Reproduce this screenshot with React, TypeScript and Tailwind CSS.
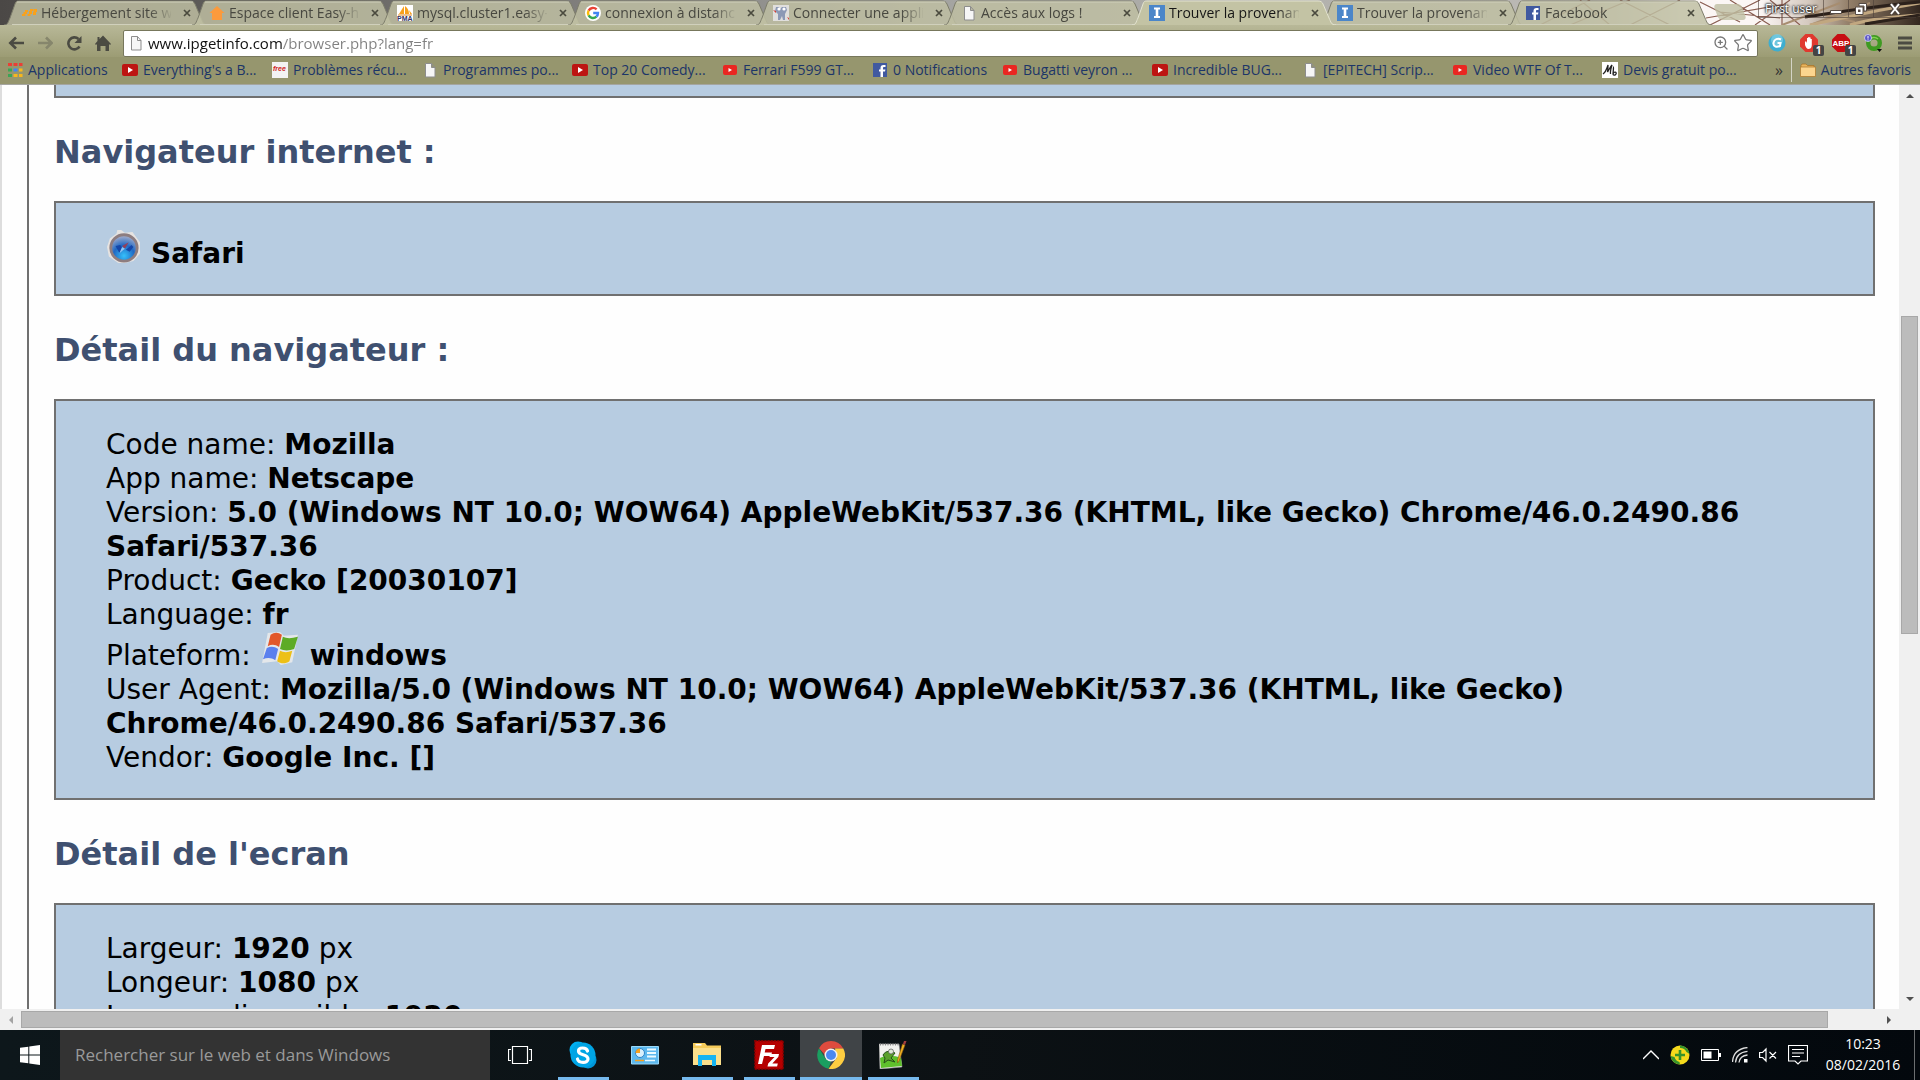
import type { ReactNode } from 'react'
import { Star, ZoomIn } from 'lucide-react'

type IconName = 'moto' | 'house' | 'pma' | 'google' | 'elephant' | 'page' | 'info' | 'facebook' | 'youtubeDark' | 'youtube' | 'free' | 'mb' | 'apps' | 'folder'

const TABS: { icon: IconName; label: string; active?: boolean }[] = [
  { icon: 'moto', label: 'Hébergement site web' },
  { icon: 'house', label: 'Espace client Easy-hosting' },
  { icon: 'pma', label: 'mysql.cluster1.easy-hosting' },
  { icon: 'google', label: 'connexion à distance' },
  { icon: 'elephant', label: 'Connecter une application' },
  { icon: 'page', label: 'Accès aux logs !' },
  { icon: 'info', label: 'Trouver la provenance', active: true },
  { icon: 'info', label: 'Trouver la provenance' },
  { icon: 'facebook', label: 'Facebook' },
]

const BOOKMARKS: { icon: IconName; label: string; width: string }[] = [
  { icon: 'apps', label: 'Applications', width: 'w-[115px]' },
  { icon: 'youtubeDark', label: "Everything's a B...", width: 'w-[150px]' },
  { icon: 'free', label: 'Problèmes récu...', width: 'w-[150px]' },
  { icon: 'page', label: 'Programmes po...', width: 'w-[150px]' },
  { icon: 'youtubeDark', label: 'Top 20 Comedy...', width: 'w-[150px]' },
  { icon: 'youtube', label: 'Ferrari F599 GT...', width: 'w-[150px]' },
  { icon: 'facebook', label: '0 Notifications', width: 'w-[130px]' },
  { icon: 'youtube', label: 'Bugatti veyron ...', width: 'w-[150px]' },
  { icon: 'youtubeDark', label: 'Incredible BUG...', width: 'w-[150px]' },
  { icon: 'page', label: '[EPITECH] Scrip...', width: 'w-[150px]' },
  { icon: 'youtube', label: 'Video WTF Of T...', width: 'w-[150px]' },
  { icon: 'mb', label: 'Devis gratuit po...', width: 'w-[150px]' },
]

function SmallIcon({ name }: { name: IconName }) {
  const shapes: Record<IconName, ReactNode> = {
    moto: (
      <path
        d="M4 5h3v2H6v2H4.500v2H1V9h1.500V7H4zM9 4h3v2h-1v3H9.500v2H6.500V9H8V6h1zM12.500 4H16v3h-1v3h-3V7h.500z"
        fill="#f9a11b"
      />
    ),
    house: <path d="M8 1L15.500 8H13v7H3V8H.5z" fill="#fb9a3c" />,
    pma: (
      <>
        <path d="M0 0h16v16H0z" fill="#fff" />
        <path d="M7 1v8H2zM8 1c3 2 4 5 4 8H8zM12 5l3 4h-2z" fill="#f7a01c" />
        <path d="M1 10h14" stroke="#e0851a" />
        <text x="0" y="16" fontSize="7" fontWeight="700" fontFamily="Liberation Sans, sans-serif" fill="#336">PMA</text>
      </>
    ),
    google: (
      <>
        <circle cx="8" cy="8" r="8" fill="#fff" />
        <g fill="none" strokeWidth="2.400">
          <path d="M11.600 4.400A5 5 0 0 0 3.600 5.600" stroke="#ea4335" />
          <path d="M3.600 5.600A5 5 0 0 0 3.600 10.400" stroke="#fbbc05" />
          <path d="M3.600 10.400A5 5 0 0 0 11.400 11.700" stroke="#34a853" />
          <path d="M11.400 11.700A5 5 0 0 0 13 8H8.200" stroke="#4285f4" />
        </g>
      </>
    ),
    elephant: (
      <>
        <path d="M0 0h16v16H0z" fill="#e0dfdd" />
        <path d="M3 2h3l1 2 2-2h4l1 3-2 4v6h-2l-1-4-2 4H5V9L2 6z" fill="#8c99b5" />
        <circle cx="6" cy="4" r="1.600" fill="#fff" />
        <circle cx="11" cy="4" r="1.600" fill="#fff" />
        <path d="M0 5l3 1v2zM14 12l2 1v2z" fill="#d23b30" />
      </>
    ),
    page: <path d="M3.500 1.500h6l3.500 4v9.500H3.500zM9.500 1.500v4H13" fill="#f6f6f6" stroke="#8d8d8d" />,
    info: (
      <>
        <path d="M0 0h16v16H0z" fill="#4b86c9" />
        <path d="M5 2.500h6v2H9.300v6.500H11v2H5v-2h1.700V4.500H5z" fill="#fff" />
      </>
    ),
    facebook: (
      <>
        <path d="M1 1h14v14H1z" fill="#4059a0" />
        <path d="M8.500 15V9.500H7v-2h1.500V6c0-2 1-3 3-3h2v2h-1.300c-.8 0-1.200.3-1.200 1.100v1.400h2.400l-.4 2H11V15z" fill="#fff" />
      </>
    ),
    youtubeDark: (
      <>
        <rect x="0" y="2" width="16" height="12" rx="2" fill="#bd1512" />
        <path d="M6 5l5 3-5 3z" fill="#fff" />
      </>
    ),
    youtube: (
      <>
        <rect x="1" y="3" width="14" height="10" rx="2" fill="#ea2721" />
        <path d="M6.500 6l3.500 2-3.500 2z" fill="#fff" />
      </>
    ),
    free: (
      <>
        <path d="M0 0h16v16H0z" fill="#f3f3f3" />
        <text x="1" y="9" fontSize="7" fontStyle="italic" fontWeight="700" fontFamily="Liberation Sans, sans-serif" fill="#d01c1c">free</text>
      </>
    ),
    mb: (
      <>
        <path d="M0 0h16v16H0z" fill="#fff" />
        <path d="M1 12C4 10 5 6 6 3c0 3 0 5-.500 7C7 8 8 5 10 3c-1 3-2 6-1.500 9M11 5c1 0 0 5 0 7 1-3 4-2 3 0s-3 1-3 0" fill="none" stroke="#222" strokeWidth="1.300" />
      </>
    ),
    apps: (
      <>
        <path d="M1 1h4v3H1zM6.500 1h4v3h-4zM12 1h3.500v3H12z" fill="#ea3f35" />
        <path d="M1 6.500h4v3H1zM1 12h4v3H1z" fill="#3ca455" />
        <path d="M6.500 6.500h4v3h-4z" fill="#4285f4" />
        <path d="M12 6.500h3.500v3H12zM6.500 12h4v3h-4zM12 12h3.500v3H12z" fill="#f7b71d" />
      </>
    ),
    folder: (
      <>
        <path d="M1 3.500l1-1.500h4l1.500 1.500H14V6H1z" fill="#e8b45c" stroke="#a8742a" strokeWidth="0.800" />
        <path d="M.5 5h15v9.500H.5z" fill="#fbd58e" stroke="#b07c31" strokeWidth="0.800" />
      </>
    ),
  }
  return (
    <svg viewBox="0 0 16 16" className="size-4 shrink-0" aria-hidden="true">
      {shapes[name]}
    </svg>
  )
}

function CloseGlyph() {
  return (
    <svg viewBox="0 0 8 8" className="size-2" aria-hidden="true">
      <path d="M1 1l6 6M7 1L1 7" stroke="#4a4a3e" strokeWidth="1.700" />
    </svg>
  )
}

function Tab({ icon, label, active }: { icon: IconName; label: string; active?: boolean }) {
  return (
    <div className={`relative -mr-4 h-[25px] w-[204px] shrink-0 ${active ? 'z-10' : ''}`}>
      <svg viewBox="0 0 204 25" className="absolute inset-0 h-[25px] w-[204px]" aria-hidden="true">
        <path
          d="M0 25C4 25 4 22 6 18L11 4C12 1 13 1 16 1H186C189 1 190 2 191 4L197 18C199 22 199 25 204 25Z"
          fill={active ? '#c3c3a4' : '#bfbfa2'}
          fillOpacity={active ? 1 : 0.84}
        />
        <path
          d="M0 25C4 25 4 22 6 18L11 4C12 1 13 1 16 1H186C189 1 190 2 191 4L197 18C199 22 199 25 204 25"
          fill="none"
          stroke={active ? '#e4e4d0' : '#7d7d6b'}
        />
        {!active && <path d="M13 2H189M8 24.500H197" stroke="#d0d0bc" />}
      </svg>
      <div className="relative flex h-[25px] items-center gap-1 pt-px pl-[17px]">
        <SmallIcon name={icon} />
        <button
          type="button"
          className={`w-[130px] overflow-hidden text-left text-sm leading-5 whitespace-nowrap [mask-image:linear-gradient(to_right,#000_108px,transparent_132px)] ${
            active ? 'text-[#161616]' : 'text-[#484840]'
          }`}
        >
          {label}
        </button>
        <button type="button" aria-label={`Fermer ${label}`} className="ml-1 flex size-4 items-center justify-center">
          <CloseGlyph />
        </button>
      </div>
    </div>
  )
}

// lattice of the wallpaper that shows through the window frame
function FrameArt() {
  return (
    <svg viewBox="0 0 400 25" preserveAspectRatio="xMaxYMid slice" className="absolute top-0 right-0 h-[25px] w-[400px]" aria-hidden="true">
      <defs>
        <linearGradient id="frame" x1="0" x2="1">
          <stop offset="0" stopColor="#b9b3a6" stopOpacity="0" />
          <stop offset="0.400" stopColor="#fbf6f4" />
          <stop offset="0.600" stopColor="#fbf6f4" />
          <stop offset="0.720" stopColor="#d5cac0" />
          <stop offset="0.820" stopColor="#94806a" />
          <stop offset="1" stopColor="#33271f" />
        </linearGradient>
      </defs>
      <path d="M0 0h400v25H0z" fill="url(#frame)" />
      <g fill="none">
        <path
          d="M20 25L70 0M50 25l60-25M60 0l30 25M100 0l50 25M110 25l50-25M180 2l40 20M190 25l50-25M210 0l40 25M235 25l35-25M250 0l30 25M262 25V0M200 12l60 6M186 18l80-14"
          stroke="#8a5e52"
          strokeWidth="1.200"
        />
        <path d="M262 25l58-22M275 8l60 14M290 25l60-22" strokeWidth="2" stroke="#a78d70" />
        <path d="M290 25c30-6 50-12 110-22M330 25c20-6 40-8 70-10" strokeWidth="3" stroke="#c1a780" />
        <path d="M285 17c30-4 60-10 115-15M345 24l55-9" strokeWidth="3" stroke="#2c211b" />
      </g>
    </svg>
  )
}

function TabStrip() {
  return (
    <div className="relative flex h-[25px] overflow-hidden bg-linear-to-r from-[#4b4846] via-[#a5a5a2] to-[#c9c6c0]">
      <FrameArt />
      <div className="relative flex pl-1">
        {TABS.map((tab, i) => (
          <Tab key={i} {...tab} />
        ))}
        <button type="button" aria-label="Nouvel onglet" className="mt-1 ml-5 h-4 w-7 skew-x-[20deg] rounded-sm bg-[#bfbfa2]/80" />
      </div>
      <div className="relative ml-auto flex h-[18px] pr-1">
        <button type="button" className="w-[66px] border border-t-0 border-[#4c4038]/60 text-xs leading-[17px] text-white [text-shadow:0_0_2px_#222,0_0_2px_#222,0_0_3px_#222]">
          First user
        </button>
        <button type="button" aria-label="Réduire" className="flex w-6 items-center justify-center border-b border-[#4c4038]/60">
          <svg viewBox="0 0 12 12" className="size-3">
            <path d="M.5 7.500h11v3H.5z" fill="#fff" stroke="#554a44" />
          </svg>
        </button>
        <button type="button" aria-label="Restaurer" className="flex w-[25px] items-center justify-center border-b border-l border-[#4c4038]/60">
          <svg viewBox="0 0 12 12" className="size-3">
            <path d="M4 .5h7.500V8H9V3H4zM.5 4H8v7.500H.5z" fill="#fff" stroke="#554a44" />
            <path d="M3 6.500h2.500V9H3z" fill="#554a44" />
          </svg>
        </button>
        <button type="button" aria-label="Fermer" className="flex w-[43px] items-center justify-center border-b border-l border-[#4c4038]/60">
          <svg viewBox="0 0 12 12" className="size-3">
            <path d="M2 1l8 10M10 1L2 11" stroke="#4d433d" strokeWidth="4" />
            <path d="M2 1l8 10M10 1L2 11" stroke="#fff" strokeWidth="2" />
          </svg>
        </button>
      </div>
    </div>
  )
}

function Badge() {
  return (
    <span className="absolute -right-1.5 -bottom-1 h-[11px] w-[11px] rounded-xs bg-[#444] text-center text-[10px] leading-[11px] font-bold text-white">1</span>
  )
}

function Toolbar() {
  return (
    <div className="flex h-8 items-center bg-linear-to-b from-[#b8b898] to-[#9c9c74] pt-1 pl-2">
      <div className="flex w-[115px] items-center gap-[13px]">
        <button type="button" aria-label="Précédent">
          <svg viewBox="0 0 16 16" className="size-4">
            <path d="M16 8H3M8 2.500L2.300 8 8 13.500" fill="none" stroke="#4b4b42" strokeWidth="2.600" />
          </svg>
        </button>
        <button type="button" aria-label="Suivant">
          <svg viewBox="0 0 16 16" className="size-4">
            <path d="M1 8h13M9 2.500L14.700 8 9 13.500" fill="none" stroke="#86866c" strokeWidth="2.600" />
          </svg>
        </button>
        <button type="button" aria-label="Actualiser">
          <svg viewBox="0 0 16 16" className="size-4">
            <path d="M13.500 11.500A6 6 0 1 1 12.500 4" fill="none" stroke="#4b4b42" strokeWidth="2.600" />
            <path d="M15.500 1v7H8.500z" fill="#4b4b42" />
          </svg>
        </button>
        <button type="button" aria-label="Accueil">
          <svg viewBox="0 0 16 16" className="size-4">
            <path d="M8 .5L16 9l-1 1-1-1v7h-3.500v-5h-5v5H2V9l-1 1-1-1L2.500 6V2h2v2z" fill="#4b4b42" />
          </svg>
        </button>
      </div>
      <div className="flex h-[27px] flex-1 items-center rounded-xs border border-[#77775c] bg-white px-1">
        <SmallIcon name="page" />
        <input
          type="text"
          aria-label="Adresse"
          defaultValue="www.ipgetinfo.com/browser.php?lang=fr"
          className="ml-1 min-w-0 flex-1 bg-linear-to-r from-[#111] from-[135px] to-[#808080] to-[135px] bg-clip-text text-[15px] leading-6 text-transparent outline-none"
        />
        <button type="button" aria-label="Zoom" className="mr-1">
          <ZoomIn className="size-4 text-[#777]" />
        </button>
        <button type="button" aria-label="Ajouter aux favoris">
          <Star className="size-5 text-[#777]" strokeWidth={1.500} />
        </button>
      </div>
      <div className="flex items-center gap-[14px] pr-2 pl-[10px]">
        <button type="button" aria-label="Ghostery">
          <svg viewBox="0 0 18 18" className="size-[18px]">
            <circle cx="9" cy="9" r="8.500" fill="#3eaed0" />
            <circle cx="9" cy="6" r="6" fill="#8fd6e8" fillOpacity="0.600" />
            <path d="M13 5.500C10 4 6 5 5.500 9S9 13.500 12 12l.5-3H9.500" fill="none" stroke="#fff" strokeWidth="2" />
          </svg>
        </button>
        <button type="button" aria-label="Adblock" className="relative">
          <svg viewBox="0 0 18 18" className="size-[18px]">
            <path d="M5.500 0h7L18 5.500v7L12.500 18h-7L0 12.500v-7z" fill="#e0392f" />
            <path d="M5 8l1-1 1 2V4h1.200v4V3h1.200v5V3.500h1.200V8.500V5h1.200v6c0 3-1.800 4-3.300 4S6 13.500 5 11z" fill="#fff" />
          </svg>
          <Badge />
        </button>
        <button type="button" aria-label="Adblock Plus" className="relative">
          <svg viewBox="0 0 18 18" className="size-[18px]">
            <path d="M5.500 0h7L18 5.500v7L12.500 18h-7L0 12.500v-7z" fill="#c70d12" />
            <text x="9" y="12" textAnchor="middle" fontSize="8" fontWeight="700" fontFamily="Liberation Sans, sans-serif" fill="#fff">ABP</text>
          </svg>
          <Badge />
        </button>
        <button type="button" aria-label="Extension">
          <svg viewBox="0 0 18 18" className="size-[18px]">
            <circle cx="10" cy="9" r="5.800" fill="none" stroke="#3f9a22" strokeWidth="4.400" />
            <path d="M5 7a5.500 5.500 0 0 1 9-2" fill="none" stroke="#86cf52" strokeWidth="1.500" />
            <circle cx="4" cy="4" r="3.500" fill="#5a55c8" stroke="#dddcf4" strokeWidth="0.800" />
            <path d="M4 2v2.600M4 5.400v1" stroke="#fff" />
            <path d="M13 15h5l-2.500 3z" fill="#111" />
          </svg>
        </button>
        <button type="button" aria-label="Menu" className="ml-0.5">
          <svg viewBox="0 0 14 14" className="size-[14px]">
            <path d="M0 .5h14v3H0zM0 5.500h14v3H0zM0 10.500h14v3H0z" fill="#4b4b42" />
          </svg>
        </button>
      </div>
    </div>
  )
}

function BookmarkBar() {
  return (
    <nav className="flex h-[28px] items-center border-b border-[#a5a5a0] bg-[#96966e] pb-0.5 pl-[7px] text-sm text-[#1c3568]">
      {BOOKMARKS.map((b) => (
        <a key={b.label} href="#" className={`flex shrink-0 items-center gap-[5px] whitespace-nowrap ${b.width}`}>
          <SmallIcon name={b.icon} />
          {b.label}
        </a>
      ))}
      <button type="button" className="ml-auto text-base leading-5 text-[#333]">»</button>
      <span className="mx-2 h-6 w-px bg-[#d4d4c6]" />
      <a href="#" className="flex items-center gap-[5px] pr-[9px]">
        <SmallIcon name="folder" />
        Autres favoris
      </a>
    </nav>
  )
}

function SafariIcon() {
  return (
    <svg viewBox="0 0 35 35" className="mr-[10px] inline h-[33px] w-[35px] align-baseline" aria-hidden="true">
      <defs>
        <radialGradient id="dial" cx="0.500" cy="0.800" r="0.800">
          <stop offset="0" stopColor="#35c0fb" />
          <stop offset="0.500" stopColor="#2069c4" />
          <stop offset="1" stopColor="#b3b4cc" />
        </radialGradient>
      </defs>
      <path d="M11 0h4l4 3 8-1 5 7 3 4v12l-7 8-9 2h-7L2 28 0 18l3-9 7-5z" fill="#e6e3e1" />
      <circle cx="18" cy="19" r="14" fill="url(#dial)" stroke="#8d7d80" strokeWidth="3" />
      <path d="M9 17l5-1 4 5-5 3zM20 21l6-5 2 2-4 5z" fill="#1546a8" />
      <path d="M23 13l-4 7-3-3z" fill="#93405a" />
      <path d="M16 18l3 2-6 5z" fill="#8cc7f5" />
    </svg>
  )
}

function WindowsFlag() {
  return (
    <svg viewBox="0 0 40 35" className="mr-[10px] inline h-[33px] w-10 align-baseline" aria-hidden="true">
      <path d="M7 1l13-1 4 4 15-1-6 29-12 3-4-4-16 2z" fill="#e4e7ea" />
      <path d="M10 3c4-3 8-3 12 0l-3 13c-4-3-8-3-12-1z" fill="#e2572a" />
      <path d="M23 5c4 2 9 2 16 0l-4 13c-5 2-11 2-15 0z" fill="#5dab26" />
      <path d="M6 17c4-2 8-2 12 1l-3 12c-4-3-9-3-13-1z" fill="#5b80ee" />
      <path d="M20 20c4 2 8 2 13 0l-3 11c-4 3-9 3-13 0z" fill="#edc017" />
    </svg>
  )
}

function Panel({ title, children }: { title: string; children: ReactNode }) {
  return (
    <section>
      <h2 className="pt-[34px] pb-[29px] text-[32px] leading-10 font-bold text-[#3f5070]">{title}</h2>
      <div className="border-2 border-[#707070] bg-[#b7cce1] px-[50px] pt-[27px] pb-[23px] text-[28px] leading-[34px] text-black">{children}</div>
    </section>
  )
}

function Row({ label, value, icon, unit }: { label: string; value: string; icon?: ReactNode; unit?: string }) {
  return (
    <p>
      {label}: {icon}
      <b>{value}</b>
      {unit && ` ${unit}`}
    </p>
  )
}

function PageContent() {
  return (
    <main className="min-w-0 flex-1 overflow-hidden border-l-2 border-[#dddddd] bg-[#fefefe] pl-[25px] font-['DejaVu_Sans',Verdana,sans-serif]">
      <div className="min-h-full border-l-2 border-[#707070] pr-6 pl-[25px]">
        <div className="h-[13px] border-2 border-t-0 border-[#707070] bg-[#b7cce1]" />
        <Panel title="Navigateur internet :">
          <p>
            <SafariIcon />
            <b>Safari</b>
          </p>
        </Panel>
        <Panel title="Détail du navigateur :">
          <Row label="Code name" value="Mozilla" />
          <Row label="App name" value="Netscape" />
          <Row label="Version" value="5.0 (Windows NT 10.0; WOW64) AppleWebKit/537.36 (KHTML, like Gecko) Chrome/46.0.2490.86 Safari/537.36" />
          <Row label="Product" value="Gecko [20030107]" />
          <Row label="Language" value="fr" />
          <Row label="Plateform" icon={<WindowsFlag />} value="windows" />
          <Row label="User Agent" value="Mozilla/5.0 (Windows NT 10.0; WOW64) AppleWebKit/537.36 (KHTML, like Gecko) Chrome/46.0.2490.86 Safari/537.36" />
          <Row label="Vendor" value="Google Inc. []" />
        </Panel>
        <Panel title="Détail de l'ecran">
          <Row label="Largeur" value="1920" unit="px" />
          <Row label="Longeur" value="1080" unit="px" />
          <Row label="Largeur disponible" value="1920" unit="px" />
        </Panel>
      </div>
    </main>
  )
}

function Arrow({ d, color }: { d: string; color: string }) {
  return (
    <svg viewBox="0 0 8 8" className="size-2" aria-hidden="true">
      <path d={d} fill={color} />
    </svg>
  )
}

function VerticalScrollbar() {
  return (
    <div className="flex w-[21px] shrink-0 flex-col items-center bg-[#f0f0f0]">
      <button type="button" aria-label="Haut" className="flex h-[21px] items-center">
        <Arrow d="M0 6l4-4 4 4z" color="#505050" />
      </button>
      <div className="flex w-full flex-1 flex-col items-center">
        <div className="flex-[210]" />
        <div className="w-[17px] flex-[317] border border-[#a8a8a8] bg-[#bcbcbc]" />
        <div className="flex-[355]" />
      </div>
      <button type="button" aria-label="Bas" className="flex h-[21px] items-center">
        <Arrow d="M0 2l4 4 4-4z" color="#505050" />
      </button>
    </div>
  )
}

function HorizontalScrollbar() {
  return (
    <div className="flex h-[21px] shrink-0 items-center bg-[#f0f0f0] pr-[21px]">
      <button type="button" aria-label="Gauche" className="flex w-[21px] justify-center">
        <Arrow d="M6 0L2 4l4 4z" color="#a3a3a3" />
      </button>
      <div className="flex h-[17px] flex-1">
        <div className="flex-[1807] border border-[#a8a8a8] bg-[#bcbcbc]" />
        <div className="flex-[50]" />
      </div>
      <button type="button" aria-label="Droite" className="flex w-[21px] justify-center">
        <Arrow d="M2 0l4 4-4 4z" color="#505050" />
      </button>
    </div>
  )
}

function SkypeIcon() {
  return (
    <svg viewBox="0 0 28 28" className="size-7">
      <circle cx="9" cy="9" r="8.500" fill="#00aff0" />
      <circle cx="19" cy="19" r="8.500" fill="#0096d8" />
      <circle cx="14" cy="14" r="12.500" fill="#00a5e5" />
      <path d="M18.500 10c-1-4-9-4-9 0 0 5 9.500 2.500 9.500 8 0 4.500-9.500 4.500-10.500 0" fill="none" stroke="#fff" strokeWidth="3.200" strokeLinecap="round" />
    </svg>
  )
}

function PanelIcon() {
  return (
    <svg viewBox="0 0 28 28" className="size-7">
      <path d="M.5 5.500h27v17.500H.5z" fill="#5cb8ee" stroke="#9ad9f8" />
      <circle cx="9" cy="12" r="4.500" fill="#d8f0fc" stroke="#2a83c8" />
      <path d="M9 12V7.500A4.500 4.500 0 0 0 4.500 12z" fill="#f7a01c" />
      <path d="M16 8.500h9M16 12h9M16 15.500h9" stroke="#eafaff" strokeWidth="1.800" />
      <path d="M4 19.500h9" stroke="#f7a01c" strokeWidth="1.500" />
      <path d="M14 19.500h10" stroke="#eafaff" strokeWidth="1.500" />
    </svg>
  )
}

function FolderIcon() {
  return (
    <svg viewBox="0 0 28 28" className="size-7">
      <path d="M0 2h12l2 2.500h14V24H0z" fill="#f5cb5a" />
      <path d="M2.500 3h6v1.500h-6z" fill="#fff" />
      <path d="M0 7h28v17H0z" fill="#fbdf8b" />
      <path d="M5 14h18v11h-4v-6H9v6H5z" fill="#16b4f2" />
    </svg>
  )
}

function FileZillaIcon() {
  return (
    <svg viewBox="0 0 30 30" className="size-[30px]">
      <path d="M.8.8h28.400v28.400H.8z" fill="#b50000" stroke="#7d0000" strokeWidth="1.500" strokeDasharray="2 1.200" />
      <path d="M8 5h13l-1 4h-8.500l-.8 3.500H18l-1 3.500h-7l-2 8H4zM16 14h9l-.7 3-6 6.500h5.500l-.7 3H13.500l.7-3 6.300-6.500H15.500z" fill="#fff" />
    </svg>
  )
}

function ChromeIcon() {
  return (
    <svg viewBox="0 0 28 28" className="size-7">
      <path d="M14 0a14 14 0 0 1 12.300 7.500H14L8 14 2 7.200A14 14 0 0 1 14 0z" fill="#dd4b3e" />
      <path d="M2 7.200l6.300 10.300L14 20.500l-2.500 7.300A14 14 0 0 1 2 7.200z" fill="#1a9f60" />
      <path d="M26.300 7.500A14 14 0 0 1 11.500 27.800l8-10.500L18 7.500z" fill="#fecd41" />
      <circle cx="14" cy="14" r="6.500" fill="#f1f1f1" />
      <circle cx="14" cy="14" r="5" fill="#4b88f0" />
    </svg>
  )
}

function NotepadIcon() {
  return (
    <svg viewBox="0 0 28 28" className="size-7">
      <path d="M0 3h20l3 23-22 2z" fill="#f2f2ee" stroke="#999" strokeWidth="0.600" />
      <path d="M1 17c6-3 14-3 21 0l1 8-21 2z" fill="#5fc02c" />
      <path d="M1 3.500h19" stroke="#888" strokeWidth="2" strokeDasharray="1 1.500" />
      <path d="M4 14c3-5 8-4 12-2l-4 5 4 4-7-2-4 3 1-5z" fill="#5aa02a" stroke="#27501a" />
      <circle cx="12" cy="10.500" r="2.500" fill="#dfe9d8" stroke="#555" strokeWidth="0.700" />
      <path d="M26 4l-6 16-1.500 2 0-3 5-16z" fill="#eeb021" stroke="#8a5a12" strokeWidth="0.600" />
      <path d="M27.500 0l-1.500 4-2-1 1-3z" fill="#a33e3e" />
    </svg>
  )
}

const APPS = [
  { name: 'Skype', icon: <SkypeIcon />, running: true },
  { name: 'Panneau de configuration', icon: <PanelIcon />, running: false },
  { name: 'Explorateur', icon: <FolderIcon />, running: true },
  { name: 'FileZilla', icon: <FileZillaIcon />, running: true },
  { name: 'Chrome', icon: <ChromeIcon />, running: true, active: true },
  { name: 'Notepad++', icon: <NotepadIcon />, running: true },
]

function Taskbar() {
  return (
    <footer className="flex h-[50px] shrink-0 bg-linear-to-r from-[#0d171b] via-[#0c1114] to-[#03080d]">
      <button type="button" aria-label="Démarrer" className="flex w-[60px] items-center justify-center">
        <svg viewBox="0 0 20 20" className="size-5">
          <path d="M0 2.800L8.300 1.700v7.800H0zM9.300 1.500L20 0v9.500H9.300zM0 10.500h8.300v7.800L0 17.200zM9.300 10.500H20V20L9.300 18.500z" fill="#fff" />
        </svg>
      </button>
      <input
        type="text"
        aria-label="Rechercher"
        placeholder="Rechercher sur le web et dans Windows"
        className="w-[430px] bg-[#333] px-[15px] text-[17px] text-white placeholder:text-[#9a9a9a] placeholder:opacity-100 outline-none"
      />
      <button type="button" aria-label="Vue des tâches" className="flex w-[62px] items-center justify-center pr-0.5">
        <svg viewBox="0 0 24 18" className="h-[18px] w-6">
          <path d="M4.500.5h15v17h-15zM3 3.500H.5v11H3M21 3.500h2.500v11H21" fill="none" stroke="#fff" strokeWidth="1.200" />
        </svg>
      </button>
      {APPS.map((app) => (
        <button
          key={app.name}
          type="button"
          aria-label={app.name}
          className={`flex w-[62px] flex-col items-center ${app.active ? 'bg-[#404447]' : ''}`}
        >
          <span className="flex flex-1 items-center pt-[3px]">{app.icon}</span>
          <span className={`h-[3px] ${app.active ? 'w-full' : 'w-[51px]'} ${app.running ? 'bg-[#76b9ed]' : ''}`} />
        </button>
      ))}
      <div className="ml-auto flex items-center">
        <div className="flex items-center gap-[11px]">
          <svg viewBox="0 0 16 16" className="size-4">
            <path d="M0 12l8-8 8 8" fill="none" stroke="#fff" strokeWidth="1.400" />
          </svg>
          <svg viewBox="0 0 20 20" className="size-5">
            <circle cx="10" cy="10" r="9.500" fill="#f5da1c" />
            <path d="M10 .5A9.500 9.500 0 0 1 19.500 9l-3-2A7 7 0 0 0 10 3zM10 19.500A9.500 9.500 0 0 1 .5 11l4 1a7 7 0 0 0 5 5z" fill="#37932b" />
            <path d="M10 5v10M5 10h10" stroke="#37932b" strokeWidth="2.600" />
          </svg>
          <svg viewBox="0 0 20 12" className="h-3 w-5">
            <path d="M.5.5h17v11H.5z" fill="none" stroke="#fff" />
            <path d="M2.500 2.500h8v7h-8zM18 4h2v4h-2z" fill="#fff" />
          </svg>
          <svg viewBox="0 0 16 16" className="size-4">
            <path d="M.5 15C1 7 6 1.500 15.500.5M3.500 15.500C4 9 8 5 15.500 4.300M7 15.500c.5-4 3.500-7 8.500-7.500" fill="none" stroke="#ddd" strokeWidth="1.300" />
            <path d="M12 12h3.500v3.500H12z" fill="#fff" />
          </svg>
          <svg viewBox="0 0 18 16" className="h-4 w-[18px]">
            <path d="M.6 5.500h3L7 2v12l-3.400-3.500h-3zM10.500 5l6.500 6.500M17 5l-6.500 6.500" fill="none" stroke="#fff" strokeWidth="1.200" />
          </svg>
          <svg viewBox="0 0 20 20" className="size-5">
            <path d="M.5.500h19v15.500H13L10 19l-3-3H.5z" fill="none" stroke="#fff" strokeWidth="1.200" />
            <path d="M4 4.500h12M4 8h12M4 11.500h8" stroke="#fff" strokeWidth="1.200" />
          </svg>
        </div>
        <button type="button" className="w-[106px] pb-0.5 pl-1 text-center text-sm leading-[21px] text-white">
          10:23
          <br />
          08/02/2016
        </button>
        <span className="mr-[5px] h-[50px] w-px bg-[#6b6e70]" />
      </div>
    </footer>
  )
}

export default function App() {
  return (
    <div className="flex h-screen flex-col overflow-hidden font-['Open_Sans','Noto_Sans',sans-serif]">
      <header className="shrink-0">
        <TabStrip />
        <Toolbar />
        <BookmarkBar />
      </header>
      <div className="flex min-h-0 flex-1">
        <PageContent />
        <VerticalScrollbar />
      </div>
      <HorizontalScrollbar />
      <Taskbar />
    </div>
  )
}
